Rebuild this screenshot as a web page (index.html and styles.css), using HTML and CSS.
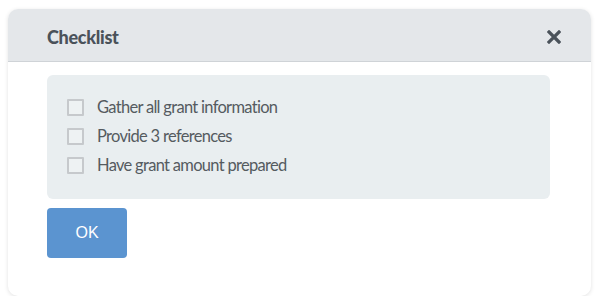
FILE: index.html
```html
<!DOCTYPE html>
<html lang="en">
<head>
    <meta charset="UTF-8">
    <meta name="viewport" content="width=device-width, initial-scale=1.0">
    <title>Checklist</title>
    <link rel="stylesheet" href="styles.css">
</head>
<body>
    <div class="modal">
        <div class="modal-header">
            <h2>Checklist</h2>
            <span class="close">
                <svg width="14" height="14" viewBox="0 0 14 14"><path d="M2 2 L12 12 M12 2 L2 12" stroke="#4a525a" stroke-width="3.2" stroke-linecap="square"/></svg>
            </span>
        </div>
        <div class="modal-body">
            <div class="checklist">
                <label class="item"><span class="box"></span>Gather all grant information</label>
                <label class="item"><span class="box"></span>Provide 3 references</label>
                <label class="item"><span class="box"></span>Have grant amount prepared</label>
            </div>
            <button class="btn-ok">OK</button>
        </div>
    </div>
</body>
</html>
```
FILE: styles.css
```css
body {
    margin: 0;
    padding: 9px 9px 0 8px;
    background: #ffffff;
    font-family: Lato, 'Open Sans', sans-serif;
}
.modal {
    height: 287px;
    border-radius: 10px;
    background: #ffffff;
    box-shadow: 0 1px 4px rgba(0, 0, 0, 0.12);
    overflow: hidden;
}
.modal-header {
    height: 53px;
    background: #e4e7ea;
    border-bottom: 1px solid #cfd3d7;
    display: flex;
    align-items: center;
    justify-content: space-between;
    padding: 3px 30px 0 39px;
    box-sizing: border-box;
}
.modal-header h2 {
    margin: 0;
    font-size: 18px;
    font-weight: 900;
    letter-spacing: -0.3px;
    color: #4a525a;
}
.close {
    display: flex;
}
.modal-body {
    padding: 13px 41px 0 39px;
}
.checklist {
    background: #e9eef0;
    border-radius: 6px;
    padding: 22px 20px 24px 20px;
    display: flex;
    flex-direction: column;
    gap: 9px;
}
.item {
    display: flex;
    align-items: center;
    height: 20px;
    font-size: 16.5px;
    letter-spacing: -0.7px;
    color: #555b60;
}
.box {
    width: 13px;
    height: 13px;
    border: 2px solid #c6c9cc;
    border-radius: 1px;
    background: #eef2f3;
    margin-right: 13px;
}
.btn-ok {
    display: block;
    margin-top: 9px;
    width: 80px;
    height: 50px;
    border: none;
    border-radius: 4px;
    background: #5b94d0;
    color: #ffffff;
    font-family: 'Liberation Sans', Arial, sans-serif;
    font-size: 16px;
}
```
